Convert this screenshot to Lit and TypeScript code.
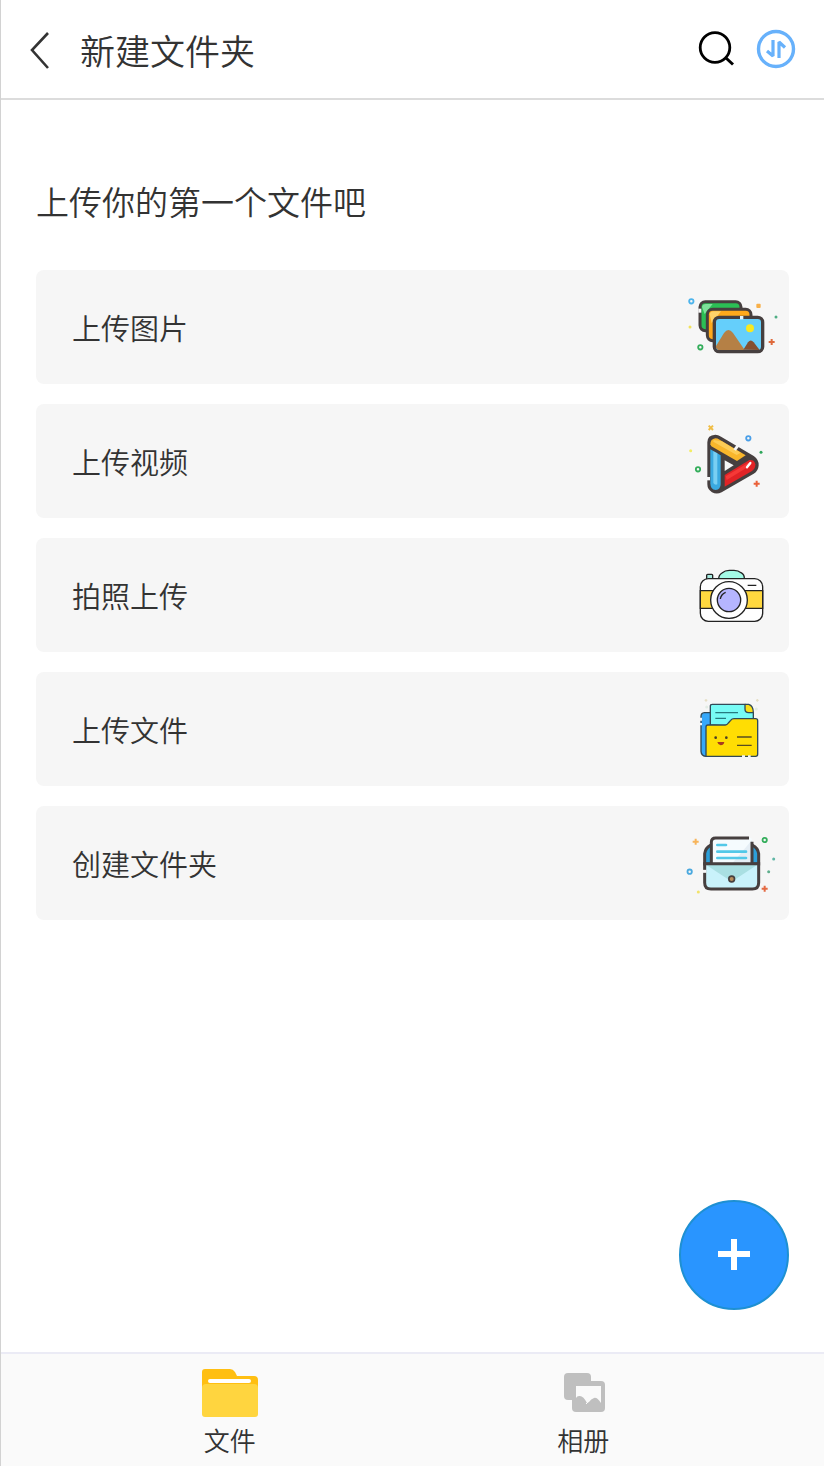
import { LitElement, html, css, svg } from "lit";
import { customElement, state } from "lit/decorators.js";

const ring = (x: number, y: number, c: string) =>
  svg`<circle cx=${x} cy=${y} r="6.500" fill="none" stroke=${c} stroke-width="5.500"/>`;
const cross = (x: number, y: number, c: string) =>
  svg`<path d="M${x - 9} ${y}h18M${x} ${y - 9}v18" stroke=${c} stroke-width="6" fill="none"/>`;
const dot = (x: number, y: number, c: string) => svg`<circle cx=${x} cy=${y} r="4.500" fill=${c}/>`;

const picturesIcon = html`<svg class="art" viewBox="0 6 327 240" aria-hidden="true">
  ${ring(34, 49, "#4db4ec")} ${ring(61, 187, "#35ae5c")} ${cross(275, 171, "#df6a3c")}
  ${dot(288, 96, "#4fae84")} ${dot(30, 126, "#f2e25a")}
  <rect x="229" y="56" width="13" height="13" rx="3" fill="#f8b04a"/>
  <rect x="60" y="50" width="123" height="87" rx="16" fill="#2bbf55" stroke="#463f3f" stroke-width="9"/>
  <path d="M66 66q1-9 12-9h20l-24 30z" fill="#7ee29a"/>
  <rect x="82" y="73" width="131" height="94" rx="16" fill="#ffa91b" stroke="#463f3f" stroke-width="9"/>
  <path d="M89 88q1-9 12-9h22l-28 36z" fill="#ffd36a"/>
  <rect x="103" y="97" width="145" height="103" rx="15" fill="#65cffb"/>
  <path d="M108 189v-6l24-39q13-18 27 0l35 51h-80z" fill="#b58045"/>
  <path d="M190 194l14-22q8-11 17 0l18 23z" fill="#85502f"/>
  <circle cx="210" cy="130" r="12" fill="#f8e821"/>
  <rect x="103" y="97" width="145" height="103" rx="15" fill="none" stroke="#463f3f" stroke-width="10"/>
  <path d="M180 98h10" stroke="#dff4fd" stroke-width="10"/>
  <path d="M55 77h9" stroke="#f6f6f6" stroke-width="12"/>
</svg>`;

const videoIcon = html`<svg class="art" viewBox="0 18 327 240" aria-hidden="true">
  ${ring(205, 70, "#4a9fe8")} ${ring(54, 163, "#35ae5c")} ${cross(230, 206, "#ea6039")}
  ${dot(243, 112, "#2da65a")} ${dot(32, 107, "#f3ed63")}
  <path d="M86 32l13 13M99 32l-13 13" stroke="#f0bd45" stroke-width="6"/>
  <path d="M86 82Q86 64 106 63q7 0 14 5l99 58q14 10 13 25-1 14-13 22l-96 55q-13 7-25 0-12-7-12-20z" fill="#463f3f" stroke="#463f3f" stroke-width="8"/>
  <path d="M134 136l27 15-27 17z" fill="#f6f6f6"/>
  <path d="M91 88q0-16 15-18 6 0 13 4l78 47-26 17-77-44z" fill="#f8b62b"/>
  <path d="M101 75l25 4 56 34-12 7-70-40z" fill="#ffd568" opacity=".7"/>
  <path d="M91 103l31 18v86q0 17-15 18-16-1-16-20z" fill="#3aa9e0"/>
  <path d="M100 109l12 6v93q-7 3-12-4z" fill="#79cff2"/>
  <path d="M134 180l74-45q15-2 18 13 1 12-10 20l-82 47z" fill="#e12326"/>
  <path d="M137 184l68-41 10 6-75 46z" fill="#ff4540" opacity=".65"/>
  <path d="M201 157l10-13" stroke="#fff" stroke-width="7" stroke-linecap="round"/>
  <path d="M164 105l10-14" stroke="#f6f6f6" stroke-width="9"/>
  <path d="M80 191h10" stroke="#f6f6f6" stroke-width="10"/>
</svg>`;

const cameraIcon = html`<svg class="art" viewBox="0 0 327 240" aria-hidden="true">
  <g stroke="#222" stroke-width="4">
    <rect x="80" y="58" width="18" height="20" rx="3" fill="#a7ece1"/>
    <path d="M116 72q0-12 10-18 9-8 22-8h14q13 0 21 7 11 6 10 19z" fill="#a4fbe6"/>
    <rect x="61" y="71" width="187" height="128" rx="24" fill="#fff"/>
    <path d="M61 107h187v53H61z" fill="#ffd83f"/>
    <circle cx="147" cy="135" r="55" fill="#fff"/>
    <circle cx="147" cy="135" r="35" fill="#b5b5ff"/>
    <path d="M121 132q2-14 16-20M203 91h26" fill="none"/>
  </g>
</svg>`;

const filesIcon = html`<svg class="art" viewBox="0 12 327 240" aria-hidden="true">
  <path d="M74 46h8M78 42v8M228 46h8M232 42v8" stroke="#e6dfc6" stroke-width="4"/>
  ${dot(80, 66, "#e2ece4")} ${dot(229, 72, "#e2ece4")}
  <g stroke="#324a58" stroke-width="4" stroke-linejoin="round">
    <path d="M92 83H73q-10 1-10 12v104q1 14 16 15h18z" fill="#36a8fa"/>
    <path d="M91 120V63q0-5 6-5h98l25 25v45z" fill="#77fbf5"/>
    <path d="M195 58h11q14 4 14 25h-14q-11 0-11-11z" fill="#f9df16"/>
    <path d="M78 214v-88q0-6 6-6h52q5 0 9-6l7-8q4-5 10-5h65q6 0 6 6v101q0 6-6 6z" fill="#ffdd03"/>
  </g>
  <path d="M106 83h68M106 100h32" stroke="#267a80" stroke-width="4"/>
  <path d="M171 156h44M171 181h44" stroke="#584d20" stroke-width="4"/>
  <circle cx="107" cy="158" r="4" fill="#493d24"/><circle cx="139" cy="158" r="4" fill="#493d24"/>
  <path d="M112 171h21q-2 10-11 10-8-1-10-10z" fill="#a83a20"/>
  <path d="M186 214h9M204 214h8M63 98v9M63 114v7" stroke="#f6f6f6" stroke-width="6"/>
</svg>`;

const folderIcon = html`<svg class="art" viewBox="0 9 327 240" aria-hidden="true">
  ${ring(254, 60, "#35ae5c")} ${ring(29, 155, "#4ba9df")} ${cross(47, 65, "#f7b45a")} ${cross(254, 206, "#e46a43")}
  ${dot(281, 117, "#5fb6a5")} ${dot(266, 155, "#5fae8d")} ${dot(55, 216, "#f2e36a")}
  <path d="M74 132v-31q2-17 17-25h127q16 8 18 25v31z" fill="#2c9fd9" stroke="#463f3f" stroke-width="9"/>
  <path d="M94 132V67q0-13 13-13h105q4 0 4 6v72z" fill="#f5fbfe"/>
  <path d="M155 132l61-72v72z" fill="#e5eef5"/>
  <path d="M94 132V67q0-13 13-13h100M216 65v67" fill="none" stroke="#463f3f" stroke-width="9"/>
  <path d="M112 75h26M112 95h86M112 114h86" stroke="#52c8e8" stroke-width="8" stroke-linecap="round"/>
  <path d="M74 131h162v57q0 19-19 19H93q-19 0-19-19z" fill="#c9f2fb"/>
  <path d="M78 134h154l-65 43q-12 7-24 0z" fill="#a9dfe2"/>
  <path d="M74 131h162v57q0 19-19 19H93q-19 0-19-19z" fill="none" stroke="#463f3f" stroke-width="9"/>
  <circle cx="155" cy="177" r="8.500" fill="#b88e5d" stroke="#463f3f" stroke-width="5"/>
  <path d="M68 154h11" stroke="#f6f6f6" stroke-width="9"/>
</svg>`;

const ACTIONS = [
  { label: "上传图片", icon: picturesIcon },
  { label: "上传视频", icon: videoIcon },
  { label: "拍照上传", icon: cameraIcon },
  { label: "上传文件", icon: filesIcon },
  { label: "创建文件夹", icon: folderIcon },
];

const TABS = [
  {
    label: "文件",
    icon: html`<svg class="tab-icon" viewBox="0 0 56 50" aria-hidden="true">
      <path d="M0 4q0-3 3-3h25q3 0 5 3l2 4h17q4 0 4 4v20H0z" fill="#ffbf12"/>
      <path d="M0 20q0-4 4-4h48q4 0 4 4v26q0 3-3 3H3q-3 0-3-3z" fill="#ffd53f"/>
      <rect x="6" y="11" width="43" height="4" rx="2" fill="#fff"/>
    </svg>`,
  },
  {
    label: "相册",
    icon: html`<svg class="tab-icon" viewBox="0 0 56 50" aria-hidden="true">
      <rect x="9" y="5" width="27" height="27" rx="4" fill="#bfbfbf"/>
      <rect x="17" y="13" width="33" height="31" rx="4" fill="#bfbfbf"/>
      <path d="M21 18h25v17q-4-6-7-5-3 1-5 4l-2 1q-4-8-8-7-2 0-3 2z" fill="#fafafa"/>
      <path d="M31 36l4-4" stroke="#fafafa" stroke-width="1"/>
    </svg>`,
  },
];

@customElement("app-root")
export class AppRoot extends LitElement {
  @state() private tab = 0;

  static styles = css`
    :host {
      display: flex;
      flex-direction: column;
      box-sizing: border-box;
      min-height: 100vh;
      border-left: 1px solid #d2d2d2;
      background: #fff;
      color: #333;
      font-family: "Noto Sans CJK SC", sans-serif;
      font-weight: 350;
    }
    button {
      margin: 0;
      padding: 0;
      border: 0;
      background: none;
      color: inherit;
      font: inherit;
      cursor: pointer;
    }
    svg { display: block; }
    .bar {
      display: flex;
      align-items: center;
      height: 98px;
      padding: 0 28px;
      border-bottom: 2px solid #dcdcdc;
    }
    .title {
      flex: 1;
      margin: 0 0 0 29px;
      padding-top: 2px;
      font-size: 35px;
      line-height: 52px;
      font-weight: inherit;
    }
    .tools { display: flex; gap: 20px; }
    .back-icon { width: 22px; height: 40px; }
    .tool-icon { width: 40px; height: 40px; }
    .content { flex: 1; padding: 76px 35px 40px; }
    .heading {
      margin: 0 0 44px;
      font-size: 33px;
      line-height: 50px;
      font-weight: inherit;
    }
    .list {
      display: grid;
      gap: 20px;
      margin: 0;
      padding: 0;
      list-style: none;
    }
    .card {
      display: flex;
      align-items: center;
      justify-content: space-between;
      width: 100%;
      padding: 17px 0 17px 36px;
      border-radius: 8px;
      background: #f6f6f6;
      font-size: 29px;
      line-height: 44px;
    }
    .art { width: 109px; height: 80px; }
    .fab {
      position: fixed;
      right: 35px;
      bottom: 156px;
      display: grid;
      place-items: center;
      width: 110px;
      height: 110px;
      border: 2px solid #1e90d2;
      border-radius: 50%;
      background: #2995ff;
    }
    .plus { width: 32px; height: 32px; }
    .tabs {
      display: flex;
      justify-content: center;
      padding: 14px 64px 6px 52px;
      border-top: 2px solid #ebebf5;
      background: #fafafa;
    }
    .tab {
      display: flex;
      flex: 0 1 354px;
      flex-direction: column;
      align-items: center;
      gap: 2px;
      font-size: 26px;
      line-height: 40px;
    }
    .tab-icon { width: 56px; height: 50px; }
  `;

  render() {
    return html`
      <header class="bar">
        <button aria-label="返回">
          <svg class="back-icon" viewBox="0 0 22 40" aria-hidden="true">
            <path d="M19 4L3 21l16 18" fill="none" stroke="#333" stroke-width="2.600"/>
          </svg>
        </button>
        <h1 class="title">新建文件夹</h1>
        <div class="tools">
          <button aria-label="搜索">
            <svg class="tool-icon" viewBox="0 0 40 40" aria-hidden="true">
              <circle cx="19" cy="18.500" r="14.800" fill="none" stroke="#000" stroke-width="2.800"/>
              <path d="M30 29l7 6.500" stroke="#000" stroke-width="3"/>
            </svg>
          </button>
          <button aria-label="传输列表">
            <svg class="tool-icon" viewBox="0 0 40 40" fill="none" stroke="#67b1fb" aria-hidden="true">
              <circle cx="20" cy="20" r="17.500" stroke-width="3.400"/>
              <path d="M17 11v16l-6-5M23 29V13l6 5.500" stroke-width="3.200" stroke-linejoin="bevel"/>
            </svg>
          </button>
        </div>
      </header>
      <main class="content">
        <h2 class="heading">上传你的第一个文件吧</h2>
        <ul class="list">
          ${ACTIONS.map((a) => html`<li><button class="card"><span>${a.label}</span>${a.icon}</button></li>`)}
        </ul>
      </main>
      <button class="fab" aria-label="添加">
        <svg class="plus" viewBox="0 0 32 32" aria-hidden="true">
          <path d="M0 15h32M16 0v31" stroke="#fff" stroke-width="6"/>
        </svg>
      </button>
      <nav class="tabs">
        ${TABS.map(
          (t, i) => html`<button
            class="tab"
            aria-current=${this.tab === i ? "page" : "false"}
            @click=${() => (this.tab = i)}
          >${t.icon}<span>${t.label}</span></button>`
        )}
      </nav>
    `;
  }
}
